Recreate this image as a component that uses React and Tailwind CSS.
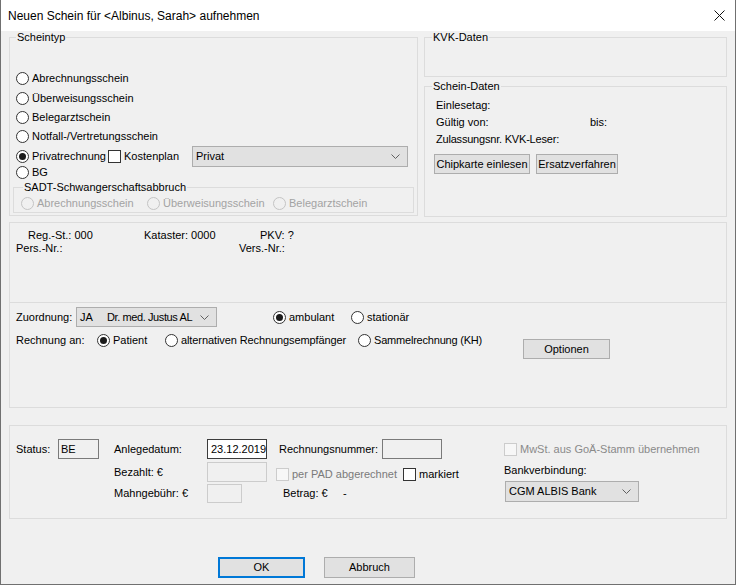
const Radio = ({ checked, disabled }) => (
  <span
    className={`w-[13px] h-[13px] rounded-full border flex items-center justify-center shrink-0 ${
      disabled ? "border-[#c4c4c4] bg-[#f0f0f0]" : "border-[#333333] bg-white"
    }`}
  >
    {checked && <span className="w-[7px] h-[7px] rounded-full bg-[#1b1b1b]" />}
  </span>
);

const Check = ({ disabled }) => (
  <span
    className={`w-[13px] h-[13px] border shrink-0 ${
      disabled ? "border-[#cccccc] bg-[#f7f7f7]" : "border-[#333333] bg-white"
    }`}
  />
);

const Chevron = () => (
  <svg width="9" height="5" viewBox="0 0 9 5" className="shrink-0">
    <polyline points="0.5,0.5 4.5,4.5 8.5,0.5" fill="none" stroke="#606060" strokeWidth="1" />
  </svg>
);

const Select = ({ className, children }) => (
  <div
    className={`flex items-center justify-between border border-[#adadad] bg-[#e1e1e1] pl-[3px] pr-[7px] ${className}`}
  >
    <div className="flex items-center">{children}</div>
    <Chevron />
  </div>
);

const Button = ({ className, children }) => (
  <div
    className={`flex items-center justify-center border border-[#adadad] bg-[#e1e1e1] ${className}`}
  >
    {children}
  </div>
);

const Group = ({ label, className, legendClass, children }) => (
  <fieldset className={`border border-[#dcdcdc] min-w-0 ${className}`}>
    <legend className={`px-[1px] leading-[13px] ${legendClass}`}>{label}</legend>
    {children}
  </fieldset>
);

const App = () => {
  return (
    <div className="w-[736px] h-[585px] bg-[#f0f0f0] border-x border-b border-[#707070] flex flex-col font-['Liberation_Sans',Arial,sans-serif] text-[11px] text-black overflow-hidden">
      {/* title bar */}
      <div className="h-[31px] bg-white flex items-center justify-between pl-[7px] pr-[10px] shrink-0">
        <span className="text-[12px]">{"Neuen Schein für <Albinus, Sarah> aufnehmen"}</span>
        <svg width="11" height="11" viewBox="0 0 11 11">
          <path d="M0.5 0.5 L10.5 10.5 M10.5 0.5 L0.5 10.5" stroke="#111" strokeWidth="1" />
        </svg>
      </div>

      <div className="flex flex-col px-[8px]">
        {/* top row */}
        <div className="flex">
          <Group label="Scheintyp" className="w-[409px] h-[185px]" legendClass="ml-[6px]">
            <div className="flex flex-col pt-[24px] pl-[6px]">
              <div className="h-[20px] flex items-center gap-[3px]">
                <Radio />
                <span>Abrechnungsschein</span>
              </div>
              <div className="h-[20px] flex items-center gap-[3px]">
                <Radio />
                <span>Überweisungsschein</span>
              </div>
              <div className="h-[19px] flex items-center gap-[3px]">
                <Radio />
                <span>Belegarztschein</span>
              </div>
              <div className="h-[19px] flex items-center gap-[3px]">
                <Radio />
                <span>Notfall-/Vertretungsschein</span>
              </div>
              <div className="h-[20px] flex items-center">
                <div className="w-[92px] flex items-center gap-[3px]">
                  <Radio checked />
                  <span>Privatrechnung</span>
                </div>
                <div className="w-[84px] flex items-center gap-[3px]">
                  <Check />
                  <span>Kostenplan</span>
                </div>
                <Select className="w-[216px] h-[21px]">
                  <span>Privat</span>
                </Select>
              </div>
              <div className="h-[13px] flex items-center gap-[3px]">
                <Radio />
                <span>BG</span>
              </div>
            </div>
            <Group
              label="SADT-Schwangerschaftsabbruch"
              className="mx-[3px] mt-[2px] h-[32px]"
              legendClass="ml-[9px]"
            >
              <div className="h-[18px] flex items-center pl-[7px] text-[#a3a3a3]">
                <div className="w-[126px] flex items-center gap-[3px]">
                  <Radio disabled />
                  <span>Abrechnungsschein</span>
                </div>
                <div className="w-[126px] flex items-center gap-[3px]">
                  <Radio disabled />
                  <span>Überweisungsschein</span>
                </div>
                <div className="flex items-center gap-[3px]">
                  <Radio disabled />
                  <span>Belegarztschein</span>
                </div>
              </div>
            </Group>
          </Group>

          <div className="w-[303px] ml-[6px] flex flex-col">
            <Group label="KVK-Daten" className="h-[46px]" legendClass="ml-[7px]" />
            <Group label="Schein-Daten" className="h-[137px] mt-[3px]" legendClass="ml-[7px]">
              <div className="flex flex-col pt-[4px] pl-[9px]">
                <div className="h-[17px] flex items-center pl-[2px]">Einlesetag:</div>
                <div className="h-[17px] flex items-center pl-[2px]">
                  <span className="w-[154px]">Gültig von:</span>
                  <span>bis:</span>
                </div>
                <div className="h-[17px] flex items-center pl-[2px] tracking-[-0.2px]">
                  Zulassungsnr. KVK-Leser:
                </div>
                <div className="flex gap-[6px] mt-[6px]">
                  <Button className="w-[96px] h-[20px]">Chipkarte einlesen</Button>
                  <Button className="w-[82px] h-[20px]">Ersatzverfahren</Button>
                </div>
              </div>
            </Group>
          </div>
        </div>

        {/* patient panel */}
        <div className="mt-[5px] border border-[#dcdcdc] flex flex-col">
          <div className="h-[80px] border-b border-[#dcdcdc] pt-[6px] flex flex-col">
            <div className="h-[13px] flex items-center pl-[18px]">
              <span className="w-[116px]">Reg.-St.: 000</span>
              <span className="w-[116px]">Kataster: 0000</span>
              <span>PKV: ?</span>
            </div>
            <div className="h-[13px] flex items-center pl-[6px]">
              <span className="w-[223px]">Pers.-Nr.:</span>
              <span>Vers.-Nr.:</span>
            </div>
          </div>
          <div className="h-[104px] pt-[4px] pl-[6px] flex flex-col">
            <div className="h-[20px] flex items-center">
              <span className="w-[60px]">Zuordnung:</span>
              <Select className="w-[141px] h-[20px]">
                <span className="w-[27px]">JA</span>
                <span className="tracking-[-0.4px]">Dr. med. Justus AL</span>
              </Select>
              <div className="ml-[56px] w-[78px] flex items-center gap-[3px]">
                <Radio checked />
                <span>ambulant</span>
              </div>
              <div className="flex items-center gap-[3px]">
                <Radio />
                <span>stationär</span>
              </div>
            </div>
            <div className="mt-[3px] flex items-start">
              <span className="w-[81px] h-[20px] flex items-center">Rechnung an:</span>
              <div className="w-[68px] h-[20px] flex items-center gap-[3px]">
                <Radio checked />
                <span>Patient</span>
              </div>
              <div className="w-[193px] h-[20px] flex items-center gap-[3px]">
                <Radio />
                <span className="tracking-[-0.1px]">alternativen Rechnungsempfänger</span>
              </div>
              <div className="w-[165px] h-[20px] flex items-center gap-[3px]">
                <Radio />
                <span className="tracking-[-0.2px]">Sammelrechnung (KH)</span>
              </div>
              <Button className="w-[87px] h-[20px] mt-[9px]">Optionen</Button>
            </div>
          </div>
        </div>

        {/* invoice box */}
        <div className="mt-[17px] h-[94px] border border-[#dcdcdc] flex pt-[13px] pl-[6px]">
          <div className="w-[488px] flex flex-col">
            <div className="h-[20px] flex items-center">
              <span className="w-[42px]">Status:</span>
              <div className="w-[41px] h-[20px] border border-[#7a7a7a] flex items-center pl-[2px]">BE</div>
              <span className="ml-[15px] w-[93px]">Anlegedatum:</span>
              <div className="w-[60px] h-[20px] border border-[#3c3c3c] bg-white flex items-center pl-[3px]">
                23.12.2019
              </div>
              <span className="ml-[12px] w-[103px]">Rechnungsnummer:</span>
              <div className="w-[60px] h-[20px] border border-[#7a7a7a]" />
            </div>
            <div className="mt-[3px] h-[20px] flex items-center pl-[98px]">
              <span className="w-[93px]">Bezahlt: €</span>
              <div className="w-[60px] h-[20px] border border-[#cccccc]" />
              <div className="ml-[9px] w-[127px] flex items-center gap-[3px] mt-[4px] text-[#7a7a7a]">
                <Check disabled />
                <span>per PAD abgerechnet</span>
              </div>
              <div className="flex items-center gap-[3px] mt-[4px]">
                <Check />
                <span>markiert</span>
              </div>
            </div>
            <div className="mt-[2px] h-[19px] flex items-center pl-[98px]">
              <span className="w-[93px]">Mahngebühr: €</span>
              <div className="w-[35px] h-[19px] border border-[#cccccc]" />
              <span className="ml-[41px] w-[60px]">Betrag: €</span>
              <span>-</span>
            </div>
          </div>
          <div className="flex flex-col">
            <div className="h-[20px] flex items-center gap-[3px] text-[#8a8a8a]">
              <Check disabled />
              <span>MwSt. aus GoÄ-Stamm übernehmen</span>
            </div>
            <div className="mt-[5px] h-[13px] flex items-center">Bankverbindung:</div>
            <Select className="mt-[4px] ml-[1px] w-[134px] h-[21px]">
              <span>CGM ALBIS Bank</span>
            </Select>
          </div>
        </div>

        {/* dialog buttons */}
        <div className="mt-[38px] flex pl-[209px] gap-[19px]">
          <Button className="w-[87px] h-[21px] !border-2 !border-[#0078d7]">OK</Button>
          <Button className="w-[91px] h-[21px]">Abbruch</Button>
        </div>
      </div>
    </div>
  );
};

export default App;
